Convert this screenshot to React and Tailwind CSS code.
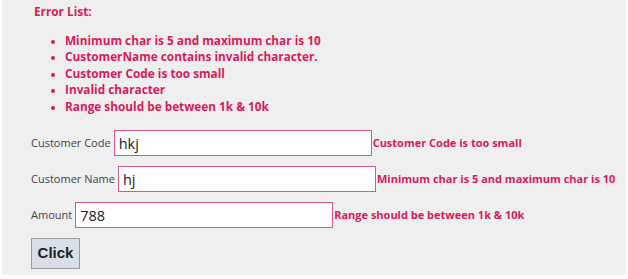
import React from 'react';

const errors = [
  'Minimum char is 5 and maximum char is 10',
  'CustomerName contains invalid character.',
  'Customer Code is too small',
  'Invalid character',
  'Range should be between 1k & 10k',
];

const fields = [
  { label: 'Customer Code', value: 'hkj', error: 'Customer Code is too small' },
  { label: 'Customer Name', value: 'hj', error: 'Minimum char is 5 and maximum char is 10' },
  { label: 'Amount', value: '788', error: 'Range should be between 1k & 10k' },
];

export default function App() {
  return (
    <div className="h-[279px] w-[628px] bg-white px-[2px] pb-[4px] font-['Open_Sans',sans-serif]">
      <div className="h-full bg-[#efefef] pl-[29px] pt-[3px]">
        <div className="pl-[3px] text-[11.8px] font-bold leading-[16px] text-[#d81b5a]">Error List:</div>
        <ul className="mt-[13px] list-disc pl-[34px] text-[11.8px] font-bold leading-[16.4px] text-[#d81b5a] marker:text-[10px]">
          {errors.map((e) => (
            <li key={e} className="pl-[-1px]">{e}</li>
          ))}
        </ul>

        <div className="mt-[16px] flex flex-col gap-[10px]">
          {fields.map((f) => (
            <div key={f.label} className="flex h-[26px] items-center">
              <label className="mr-[3px] text-[11px] text-[#444]">{f.label}</label>
              <input
                readOnly
                value={f.value}
                className="h-[26px] w-[258px] border border-[#d8578a] bg-white px-[4px] text-[14.5px] text-[#222] outline-none"
              />
              <span className="ml-[1px] text-[11px] font-bold text-[#d81b5a]">{f.error}</span>
            </div>
          ))}
        </div>

        <button className="mt-[10px] h-[31px] w-[49px] border border-[#9a9a9a] bg-[#d9dfe6] font-['Liberation_Sans',sans-serif] text-[15px] font-bold text-[#222]">
          Click
        </button>
      </div>
    </div>
  );
}
